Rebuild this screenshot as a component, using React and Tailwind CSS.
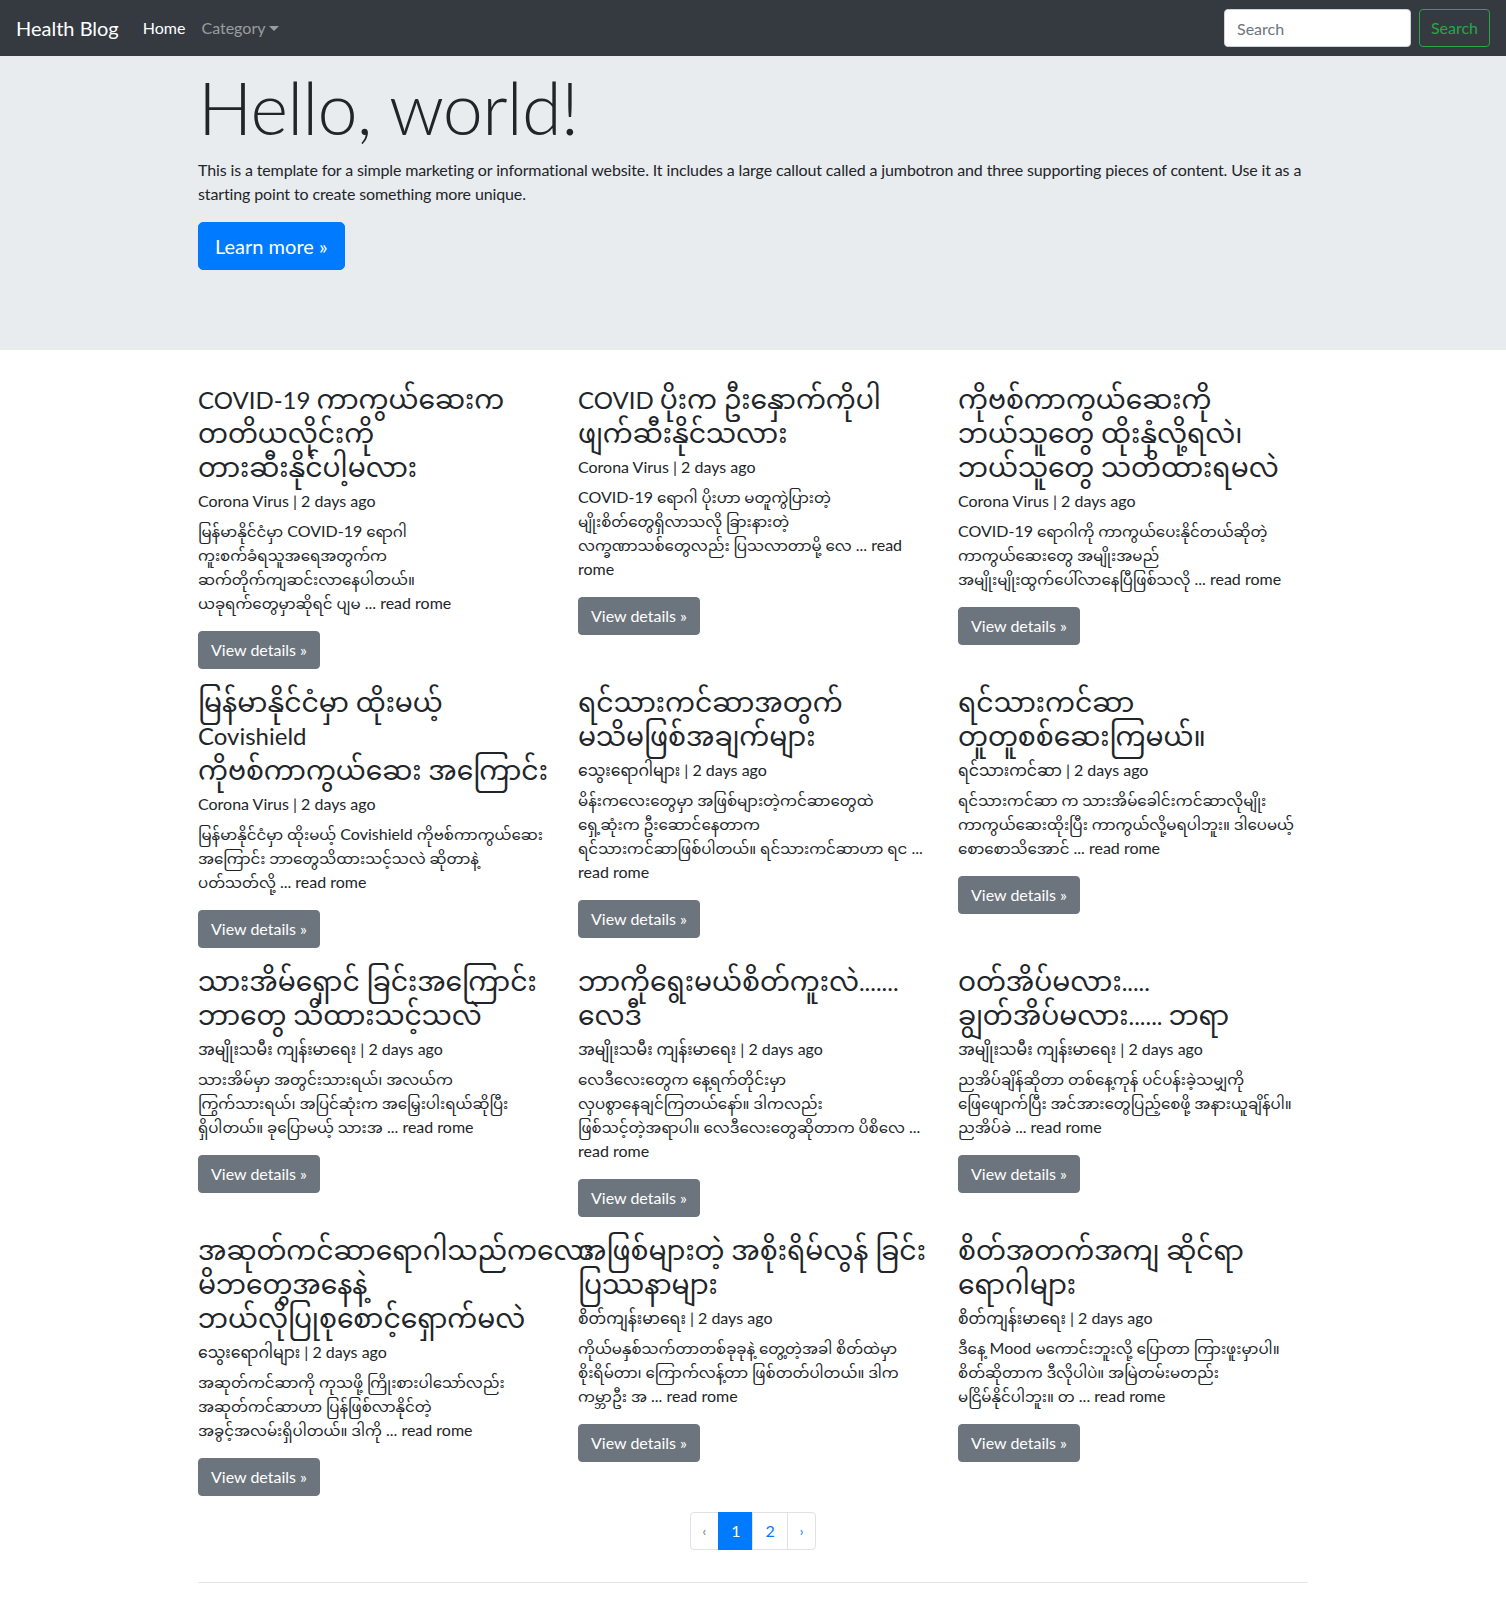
import React from 'react';

// each entry keeps the line breaks seen in the page
const posts = [
  {
    title: ['COVID-19 ကာကွယ်ဆေးက', 'တတိယလိုင်းကို', 'တားဆီးနိုင်ပါ့မလား'],
    cat: 'Corona Virus',
    body: ['မြန်မာနိုင်ငံမှာ COVID-19 ရောဂါ', 'ကူးစက်ခံရသူအရေအတွက်က', 'ဆက်တိုက်ကျဆင်းလာနေပါတယ်။', 'ယခုရက်တွေမှာဆိုရင် ပျမ ... read rome'],
  },
  {
    title: ['COVID ပိုးက ဦးနှောက်ကိုပါ', 'ဖျက်ဆီးနိုင်သလား'],
    cat: 'Corona Virus',
    body: ['COVID-19 ရောဂါ ပိုးဟာ မတူကွဲပြားတဲ့', 'မျိုးစိတ်တွေရှိလာသလို ခြားနားတဲ့', 'လက္ခဏာသစ်တွေလည်း ပြသလာတာမို့ လေ ... read', 'rome'],
  },
  {
    title: ['ကိုဗစ်ကာကွယ်ဆေးကို', 'ဘယ်သူတွေ ထိုးနှံလို့ရလဲ၊', 'ဘယ်သူတွေ သတိထားရမလဲ'],
    cat: 'Corona Virus',
    body: ['COVID-19 ရောဂါကို ကာကွယ်ပေးနိုင်တယ်ဆိုတဲ့', 'ကာကွယ်ဆေးတွေ အမျိုးအမည်', 'အမျိုးမျိုးထွက်ပေါ်လာနေပြီဖြစ်သလို ... read rome'],
  },
  {
    title: ['မြန်မာနိုင်ငံမှာ ထိုးမယ့်', 'Covishield', 'ကိုဗစ်ကာကွယ်ဆေး အကြောင်း'],
    cat: 'Corona Virus',
    body: ['မြန်မာနိုင်ငံမှာ ထိုးမယ့် Covishield ကိုဗစ်ကာကွယ်ဆေး', 'အကြောင်း ဘာတွေသိထားသင့်သလဲ ဆိုတာနဲ့', 'ပတ်သတ်လို့ ... read rome'],
  },
  {
    title: ['ရင်သားကင်ဆာအတွက်', 'မသိမဖြစ်အချက်များ'],
    cat: 'သွေးရောဂါများ',
    body: ['မိန်းကလေးတွေမှာ အဖြစ်များတဲ့ကင်ဆာတွေထဲ', 'ရှေ့ဆုံးက ဦးဆောင်နေတာက', 'ရင်သားကင်ဆာဖြစ်ပါတယ်။ ရင်သားကင်ဆာဟာ ရင ...', 'read rome'],
  },
  {
    title: ['ရင်သားကင်ဆာ', 'တူတူစစ်ဆေးကြမယ်။'],
    cat: 'ရင်သားကင်ဆာ',
    body: ['ရင်သားကင်ဆာ က သားအိမ်ခေါင်းကင်ဆာလိုမျိုး', 'ကာကွယ်ဆေးထိုးပြီး ကာကွယ်လို့မရပါဘူး။ ဒါပေမယ့်', 'စောစောသိအောင် ... read rome'],
  },
  {
    title: ['သားအိမ်ရှောင် ခြင်းအကြောင်း', 'ဘာတွေ သိထားသင့်သလဲ'],
    cat: 'အမျိုးသမီး ကျန်းမာရေး',
    body: ['သားအိမ်မှာ အတွင်းသားရယ်၊ အလယ်က', 'ကြွက်သားရယ်၊ အပြင်ဆုံးက အမြှေးပါးရယ်ဆိုပြီး', 'ရှိပါတယ်။ ခုပြောမယ့် သားအ ... read rome'],
  },
  {
    title: ['ဘာကိုရွေးမယ်စိတ်ကူးလဲ.......', 'လေဒီ'],
    cat: 'အမျိုးသမီး ကျန်းမာရေး',
    body: ['လေဒီလေးတွေက နေ့ရက်တိုင်းမှာ', 'လှပစွာနေချင်ကြတယ်နော်။ ဒါကလည်း', 'ဖြစ်သင့်တဲ့အရာပါ။ လေဒီလေးတွေဆိုတာက ပိစိလေ ...', 'read rome'],
  },
  {
    title: ['ဝတ်အိပ်မလား.....', 'ချွတ်အိပ်မလား...... ဘရာ'],
    cat: 'အမျိုးသမီး ကျန်းမာရေး',
    body: ['ညအိပ်ချိန်ဆိုတာ တစ်နေ့ကုန် ပင်ပန်းခဲ့သမျှကို', 'ဖြေဖျောက်ပြီး အင်အားတွေပြည့်စေဖို့ အနားယူချိန်ပါ။', 'ညအိပ်ခဲ ... read rome'],
  },
  {
    title: ['အဆုတ်ကင်ဆာရောဂါသည်ကလေး', 'မိဘတွေအနေနဲ့', 'ဘယ်လိုပြုစုစောင့်ရှောက်မလဲ'],
    cat: 'သွေးရောဂါများ',
    body: ['အဆုတ်ကင်ဆာကို ကုသဖို့ ကြိုးစားပါသော်လည်း', 'အဆုတ်ကင်ဆာဟာ ပြန်ဖြစ်လာနိုင်တဲ့', 'အခွင့်အလမ်းရှိပါတယ်။ ဒါကို ... read rome'],
  },
  {
    title: ['အဖြစ်များတဲ့ အစိုးရိမ်လွန် ခြင်း', 'ပြဿနာများ'],
    cat: 'စိတ်ကျန်းမာရေး',
    body: ['ကိုယ်မနှစ်သက်တာတစ်ခုခုနဲ့ တွေ့တဲ့အခါ စိတ်ထဲမှာ', 'စိုးရိမ်တာ၊ ကြောက်လန့်တာ ဖြစ်တတ်ပါတယ်။ ဒါက', 'ကမ္ဘာဦး အ ... read rome'],
  },
  {
    title: ['စိတ်အတက်အကျ ဆိုင်ရာ', 'ရောဂါများ'],
    cat: 'စိတ်ကျန်းမာရေး',
    body: ['ဒီနေ့ Mood မကောင်းဘူးလို့ ပြောတာ ကြားဖူးမှာပါ။', 'စိတ်ဆိုတာက ဒီလိုပါပဲ။ အမြဲတမ်းမတည်း', 'မငြိမ်နိုင်ပါဘူး။ တ ... read rome'],
  },
];

// Myanmar runs get their own size so the widths follow the screenshot
const mm = (s, cls) =>
  s.split(/([\u1000-\u109F][\u1000-\u109F\s]*[\u1000-\u109F]|[\u1000-\u109F])/).map((part, i) =>
    /[\u1000-\u109F]/.test(part) ? (
      <span key={i} className={cls}>{part}</span>
    ) : (
      part
    )
  );

const Post = ({ title, cat, body }) => (
  <div className="w-1/3 px-[15px]">
    <h2 className="text-[24px] leading-[34px] font-normal text-[#212529] mb-[5px]">
      {title.map((l) => (
        <span key={l} className="block h-[34px] whitespace-nowrap">{mm(l, 'text-[1.11em]')}</span>
      ))}
    </h2>
    <p className="h-6 mb-[6px] whitespace-nowrap">{mm(cat, 'text-[0.98em]')} | 2 days ago</p>
    <p className="mb-4">
      {body.map((l) => (
        <span key={l} className="block h-6 whitespace-nowrap">{mm(l, 'text-[0.94em]')}</span>
      ))}
    </p>
    <p className="mb-4">
      <a href="#" className="inline-block bg-[#6c757d] border border-[#6c757d] text-white rounded-[4px] px-3 py-[6px] leading-6">
        View details »
      </a>
    </p>
  </div>
);

export default function App() {
  return (
    <div className="min-h-screen bg-white text-[16px] leading-6 text-[#212529] font-['Lato','Noto_Sans_Myanmar','Noto_Sans',sans-serif]">
      {/* navbar */}
      <nav className="h-14 bg-[#343a40] flex items-center px-4">
        <a href="#" className="text-white text-[20px] leading-[30px] mr-4">Health Blog</a>
        <ul className="flex items-center">
          <li><a href="#" className="px-2 text-white">Home</a></li>
          <li>
            <a href="#" className="px-2 text-white/50 inline-flex items-center">
              Category
              <span className="ml-[4px] mt-[1px] inline-block border-t-[5px] border-x-[5px] border-x-transparent border-t-current" />
            </a>
          </li>
        </ul>
        <form className="ml-auto flex items-center">
          <input
            type="text"
            placeholder="Search"
            className="w-[187px] h-[38px] bg-white border border-[#ced4da] rounded-[4px] px-3 text-[#495057] placeholder:text-[#6c757d] outline-none"
          />
          <button type="button" className="ml-2 h-[38px] w-[71px] border border-[#28a745] rounded-[4px] text-[#28a745]">
            Search
          </button>
        </form>
      </nav>

      {/* jumbotron */}
      <div className="bg-[#e9ecef] pt-2 pb-16 mb-8">
        <div className="w-[1140px] mx-auto px-[15px]">
          <h1 className="text-[72px] leading-[1.2] font-light tracking-[-0.8px] mb-2">Hello, world!</h1>
          <p className="mb-4 tracking-[-0.13px]">
            This is a template for a simple marketing or informational website. It includes a large callout called a jumbotron and three supporting pieces of content. Use it as a starting point to create something more unique.
          </p>
          <p className="mb-4">
            <a href="#" className="inline-block bg-[#007bff] border border-[#007bff] text-white text-[20px] leading-[30px] px-4 py-2 rounded-[5px]">
              Learn more »
            </a>
          </p>
        </div>
      </div>

      {/* posts */}
      <div className="w-[1140px] mx-auto px-[15px]">
        <div className="flex flex-wrap -mx-[15px]">
          {posts.map((p) => (
            <Post key={p.title[0]} {...p} />
          ))}
        </div>

        <ul className="flex justify-center mb-8">
          <li><a href="#" className="block px-3 py-2 leading-5 border border-[#dee2e6] rounded-l-[4px] text-[#6c757d] text-[13px]">‹</a></li>
          <li><a href="#" className="block -ml-px px-3 py-2 leading-5 border border-[#007bff] bg-[#007bff] text-white">1</a></li>
          <li><a href="#" className="block -ml-px px-3 py-2 leading-5 border border-[#dee2e6] text-[#007bff]">2</a></li>
          <li><a href="#" className="block -ml-px px-3 py-2 leading-5 border border-[#dee2e6] rounded-r-[4px] text-[#007bff] text-[13px]">›</a></li>
        </ul>

        <hr className="mb-4 border-0 border-t border-black/10" />
        <div className="h-16" />
      </div>
    </div>
  );
}
